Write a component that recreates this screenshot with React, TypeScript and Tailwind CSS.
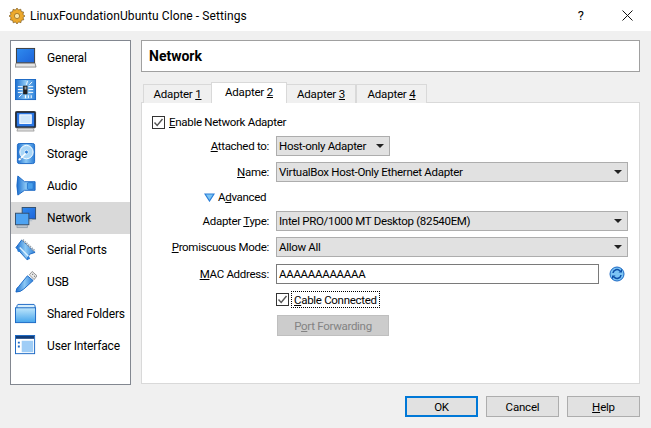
const Gradients = () => (
  <svg width="0" height="0" className="absolute">
    <defs>
      <linearGradient id="screen" x1="0" y1="0" x2="1" y2="1">
        <stop offset="0" stopColor="#2f8cf0" />
        <stop offset="1" stopColor="#1d62d8" />
      </linearGradient>
      <linearGradient id="side" x1="0" y1="0" x2="1" y2="0">
        <stop offset="0" stopColor="#1b6fd0" />
        <stop offset="0.5" stopColor="#8cc8f4" />
        <stop offset="1" stopColor="#2a7ed8" />
      </linearGradient>
      <linearGradient id="folder" x1="0" y1="0" x2="0" y2="1">
        <stop offset="0" stopColor="#bfe6fb" />
        <stop offset="1" stopColor="#45a5ec" />
      </linearGradient>
    </defs>
  </svg>
);

const icons: Record<string, React.ReactNode> = {
  General: (
    <>
      <rect x="1.5" y="1.5" width="19" height="15" fill="url(#screen)" stroke="#3a3a3a" />
      <path d="M1 17h20l1 4H0z" fill="#e4e4e4" stroke="#777" strokeWidth="0.8" />
    </>
  ),
  System: (
    <>
      <rect x="0.5" y="0.5" width="21" height="21" fill="url(#side)" stroke="#1b68c4" />
      <path d="M3 8h5M3 11h5M3 14h5M14 8h5M14 11h5M14 14h5M13 2l-1 4M18 3l-3 3M4 19l3-3M14 17v3M17 17v3M11 17v3" stroke="#fff" strokeWidth="1" />
      <rect x="8.5" y="7" width="4.5" height="9" fill="#222" />
      <rect x="10" y="8" width="2" height="3" fill="#9a9a9a" />
    </>
  ),
  Display: (
    <>
      <rect x="0.5" y="0.5" width="21" height="17" rx="1" fill="#1f2f48" stroke="#333" />
      <rect x="2" y="2" width="18" height="14" fill="#2c78e4" />
      <rect x="5" y="4" width="12" height="9" fill="#cfe6fb" stroke="#fff" />
      <path d="M3 18h16l1 3H2z" fill="#dcdcdc" stroke="#888" strokeWidth="0.7" />
    </>
  ),
  Storage: (
    <>
      <rect x="2.5" y="0.5" width="18" height="21" rx="2" fill="url(#side)" stroke="#1b68c4" />
      <circle cx="12" cy="9.5" r="7" fill="#a9d6f7" stroke="#fff" />
      <circle cx="12" cy="9.5" r="2" fill="#2a7ed8" stroke="#fff" strokeWidth="0.7" />
      <path d="M4 18 L11 11" stroke="#fff" strokeWidth="1.6" />
      <circle cx="5" cy="17" r="1.6" fill="#fff" stroke="#1b68c4" strokeWidth="0.6" />
    </>
  ),
  Audio: (
    <>
      <path d="M3 1 L10 7 H21 V16 H10 L3 21 Q1 11 3 1z" fill="url(#side)" stroke="#1b68c4" />
      <rect x="13" y="8" width="6" height="7" rx="1" fill="#4aa0ea" stroke="#1b68c4" strokeWidth="0.7" />
    </>
  ),
  Network: (
    <>
      <rect x="7.5" y="0.5" width="14" height="12" fill="url(#screen)" stroke="#34506e" />
      <path d="M10 13h8v2h-8z" fill="#b9c4cf" />
      <rect x="0.5" y="6.5" width="14" height="12" fill="#4ea3f2" stroke="#34506e" />
      <path d="M2 19h11v2.5H2z" fill="#b9c4cf" stroke="#67778a" strokeWidth="0.5" />
    </>
  ),
  "Serial Ports": (
    <>
      <path d="M7 1 L21 14 L15 16 L13 22 L1 9 z" fill="url(#side)" stroke="#1b68c4" />
      <path d="M8 1 L21 13" stroke="#9aa6b0" strokeWidth="2.4" strokeDasharray="1.5 1" />
      <path d="M5 9l9 9" stroke="#d9efff" strokeWidth="1.5" />
      <circle cx="4" cy="12" r="1.5" fill="#2a7ed8" />
      <circle cx="14" cy="20" r="1.5" fill="#2a7ed8" />
    </>
  ),
  USB: (
    <>
      <path d="M1 22 Q1 18 4 16 L13 5 L19 10 L9 19 Q6 22 1 22z" fill="url(#side)" stroke="#1b68c4" />
      <path d="M15 4 L18 0.5 L23 5 L20 9z" fill="#e8e8e8" stroke="#777" strokeWidth="0.8" />
      <path d="M18 3.5h1M20 5.5h1" stroke="#555" />
    </>
  ),
  "Shared Folders": (
    <>
      <path d="M2 6 V3 L3 1.5 H20 L21 3 V6z" fill="#d6eefc" stroke="#1b68c4" />
      <rect x="0.5" y="5" width="21" height="15.5" fill="url(#folder)" stroke="#1b68c4" />
    </>
  ),
  "User Interface": (
    <>
      <rect x="0.5" y="0.5" width="20" height="19" fill="#fff" stroke="#1b68c4" />
      <rect x="1" y="1" width="19" height="3" fill="#123c78" />
      <rect x="7" y="6" width="12" height="12" fill="#9fcdf6" />
      <path d="M3 7h2v2H3zM3 11h2v2H3z" fill="#1b68c4" />
    </>
  ),
};

const sections = [
  "General",
  "System",
  "Display",
  "Storage",
  "Audio",
  "Network",
  "Serial Ports",
  "USB",
  "Shared Folders",
  "User Interface",
];

function Caret() {
  return (
    <svg width="8" height="4" viewBox="0 0 8 4" className="shrink-0">
      <path d="M0 0h8L4 4z" fill="#222" />
    </svg>
  );
}

function Check() {
  return (
    <span className="w-[13px] h-[13px] border border-[#333333] bg-white flex items-center justify-center shrink-0">
      <svg width="11" height="11" viewBox="0 0 11 11">
        <path d="M1.500 5.500 L4.200 8.500 L9.500 2" fill="none" stroke="#555" strokeWidth="1.400" />
      </svg>
    </span>
  );
}

function Label({ children }: { children: React.ReactNode }) {
  return <span className="w-[117px] text-right shrink-0 pt-[2px]">{children}</span>;
}

function Combo({ text, wide = true }: { text: string; wide?: boolean }) {
  return (
    <div
      className={`h-[20px] bg-[#e1e1e1] border border-[#adadad] flex items-center justify-between pl-[2px] pr-[5px] ${
        wide ? "w-[352px]" : "w-[114px]"
      }`}
    >
      <span className="pt-[2px]">{text}</span>
      <Caret />
    </div>
  );
}

function DialogButton({ children, primary }: { children: React.ReactNode; primary?: boolean }) {
  return (
    <div
      className={`w-[73px] h-[21px] bg-[#e1e1e1] flex items-center justify-center ${
        primary ? "border-2 border-[#0078d7]" : "border border-[#adadad]"
      }`}
    >
      <span className="pt-[2px]">{children}</span>
    </div>
  );
}

function Tab({ children, active, width = "w-[69px]" }: { children: React.ReactNode; active?: boolean; width?: string }) {
  return active ? (
    <div className="h-[21px] w-[76px] -ml-px -mr-px z-10 bg-white border border-b-0 border-[#d9d9d9] flex items-center justify-center">
      {children}
    </div>
  ) : (
    <div className={`h-[19px] ${width} mt-[2px] pt-[2px] bg-[#f0f0f0] border border-b-0 border-[#d9d9d9] flex items-center justify-center`}>
      {children}
    </div>
  );
}

export default function App() {
  return (
    <div className="w-[651px] h-[428px] bg-[#f0f0f0] text-[12px] leading-none text-black font-['Roboto','Noto_Sans',sans-serif] whitespace-nowrap overflow-hidden flex flex-col">
      <Gradients />
      {/* Title bar */}
      <div className="h-[31px] bg-white flex items-center pl-[9px] shrink-0">
        <svg width="16" height="16" viewBox="0 0 16 16" className="shrink-0">
          <path
            d="M8 0l1.500 2 2.300-.8.5 2.400 2.400.5-.8 2.300L16 8l-2 1.500.8 2.300-2.400.5-.5 2.400-2.300-.8L8 16l-1.500-2-2.300.8-.5-2.400-2.400-.5.8-2.300L0 8l2-1.500-.8-2.300 2.400-.5.5-2.400 2.300.8z"
            fill="#eda92c"
            stroke="#6b4a12"
            strokeWidth="0.6"
          />
          <circle cx="8" cy="8" r="2.600" fill="#fbe6a8" stroke="#8a5f16" strokeWidth="0.7" />
        </svg>
        <span className="ml-[5px] tracking-[0.08px]">LinuxFoundationUbuntu Clone - Settings</span>
        <span className="ml-auto mr-[38px] text-[13px]">?</span>
        <svg width="11" height="11" viewBox="0 0 11 11" className="mr-[18px]">
          <path d="M0.500 0.500l10 10M10.500 0.500l-10 10" stroke="#111" strokeWidth="1" />
        </svg>
      </div>

      <div className="flex flex-1 min-h-0 pt-[9px] px-[10px]">
        {/* Section list */}
        <div className="w-[121px] h-[345px] bg-white border border-[#828790] pt-px shrink-0 tracking-[-0.15px]">
          {sections.map((name) => (
            <div
              key={name}
              className={`h-[32px] flex items-center pl-[4px] ${name === "Network" ? "bg-[#d9d9d9]" : ""}`}
            >
              <svg width="22" height="22" viewBox="0 0 23 23" className="shrink-0">
                {icons[name]}
              </svg>
              <span className="ml-[10px]">{name}</span>
            </div>
          ))}
        </div>

        <div className="ml-[10px] w-[499px]">
          {/* Section heading */}
          <div className="h-[32px] bg-white border border-[#a0a0a0] flex items-center pl-[7px] font-bold text-[14px]">
            Network
          </div>

          {/* Tabs */}
          <div className="mt-[12px] flex pl-[2px] h-[19px] items-end relative z-10 -mb-px text-[11.5px] tracking-[-0.2px]">
            <Tab>
              <span>Adapter <u>1</u></span>
            </Tab>
            <Tab active>
              <span>Adapter <u>2</u></span>
            </Tab>
            <Tab width="w-[70px]">
              <span>Adapter <u>3</u></span>
            </Tab>
            <Tab width="w-[71px]">
              <span>Adapter <u>4</u></span>
            </Tab>
          </div>

          {/* Adapter pane */}
          <div className="h-[282px] bg-white border border-[#d9d9d9] pl-[10px] pt-[11px] text-[11.5px] tracking-[-0.3px]">
            <div className="flex items-center h-[16px] gap-[4px]">
              <Check />
              <span className="pt-[2px]"><u>E</u>nable Network Adapter</span>
            </div>
            <div className="flex items-center gap-[7px] mt-[6px]">
              <Label><u>A</u>ttached to:</Label>
              <Combo text="Host-only Adapter" wide={false} />
            </div>
            <div className="flex items-center gap-[7px] mt-[6px]">
              <Label><u>N</u>ame:</Label>
              <Combo text="VirtualBox Host-Only Ethernet Adapter" />
            </div>
            <div className="flex items-center h-[16px] mt-[7px] pl-[52px] gap-[3px]">
              <svg width="11" height="9" viewBox="0 0 11 9">
                <path d="M1 1h9L5.500 8z" fill="#7cc4f4" stroke="#2a7ed8" strokeWidth="1.200" />
              </svg>
              <span className="pt-[2px]">A<u>d</u>vanced</span>
            </div>
            <div className="flex items-center gap-[7px] mt-[6px]">
              <Label>Adapter <u>T</u>ype:</Label>
              <Combo text="Intel PRO/1000 MT Desktop (82540EM)" />
            </div>
            <div className="flex items-center gap-[7px] mt-[6px]">
              <Label><u>P</u>romiscuous Mode:</Label>
              <Combo text="Allow All" />
            </div>
            <div className="flex items-center gap-[7px] mt-[7px]">
              <Label><u>M</u>AC Address:</Label>
              <div className="w-[323px] h-[20px] bg-white border border-[#7a7a7a] flex items-center pl-[2px] pt-[2px]">
                AAAAAAAAAAAA
              </div>
              <svg width="16" height="16" viewBox="0 0 16 16" className="ml-[3px] shrink-0">
                <circle cx="8" cy="8" r="7" fill="#7cc4f4" stroke="#1b68c4" />
                <path d="M4 7a4 4 0 0 1 7-2M12 9a4 4 0 0 1-7 2" fill="none" stroke="#0d4fa8" strokeWidth="1.600" />
                <path d="M9.500 6.500h3.500V3zM6.500 9.500H3V13z" fill="#0d4fa8" />
              </svg>
            </div>
            <div className="flex items-center h-[17px] mt-[7px] ml-[124px]">
              <Check />
              <span className="ml-[2px] border border-dotted border-black h-[17px] flex items-center px-[2px] pt-[2px]">
                <span><u>C</u>able Connected</span>
              </span>
            </div>
            <div className="ml-[125px] mt-[7px] w-[112px] h-[21px] pt-[2px] bg-[#cccccc] border border-[#bfbfbf] flex items-center justify-center text-[#838383]">
              <span>P<u>o</u>rt Forwarding</span>
            </div>
          </div>
        </div>
      </div>

      {/* Dialog buttons */}
      <div className="flex justify-end gap-[8px] pr-[11px] pb-[11px] shrink-0 text-[11.5px] tracking-[-0.2px]">
        <DialogButton primary>OK</DialogButton>
        <DialogButton>Cancel</DialogButton>
        <DialogButton><u>H</u>elp</DialogButton>
      </div>
    </div>
  );
}
